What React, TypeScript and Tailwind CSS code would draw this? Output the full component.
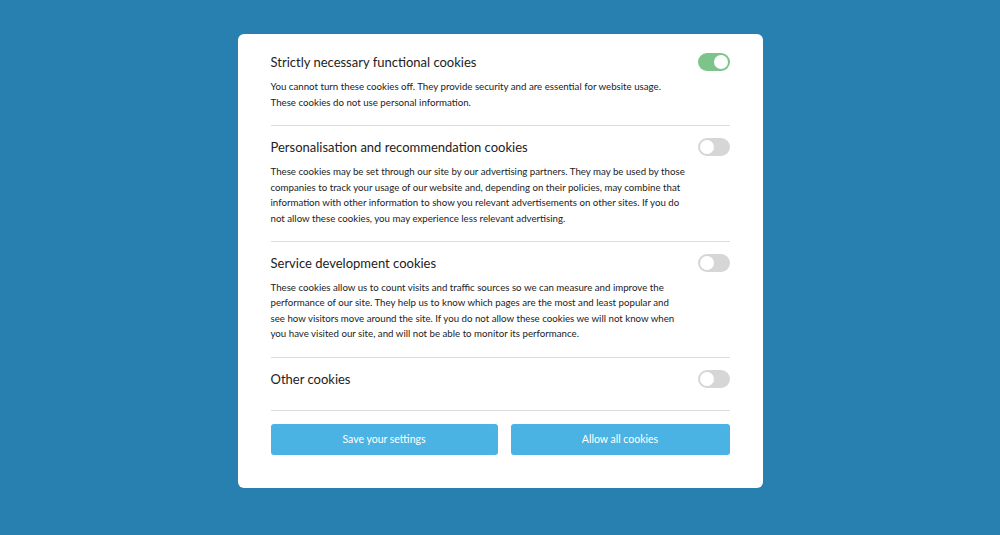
const sections = [
  {
    title: 'Strictly necessary functional cookies',
    on: true,
    body: [
      'You cannot turn these cookies off. They provide security and are essential for website usage.',
      'These cookies do not use personal information.',
    ],
  },
  {
    title: 'Personalisation and recommendation cookies',
    on: false,
    body: [
      'These cookies may be set through our site by our advertising partners. They may be used by those',
      'companies to track your usage of our website and, depending on their policies, may combine that',
      'information with other information to show you relevant advertisements on other sites. If you do',
      'not allow these cookies, you may experience less relevant advertising.',
    ],
  },
  {
    title: 'Service development cookies',
    on: false,
    body: [
      'These cookies allow us to count visits and traffic sources so we can measure and improve the',
      'performance of our site. They help us to know which pages are the most and least popular and',
      'see how visitors move around the site. If you do not allow these cookies we will not know when',
      'you have visited our site, and will not be able to monitor its performance.',
    ],
  },
  { title: 'Other cookies', on: false, body: [] as string[] },
]

function Toggle({ on }: { on: boolean }) {
  return (
    <div
      className={`flex h-[18px] w-[32px] shrink-0 items-center rounded-full px-[2px] ${
        on ? 'justify-end bg-[#7cc489]' : 'justify-start bg-[#d6d6d6]'
      }`}
    >
      <div className="h-[14px] w-[14px] rounded-full bg-white" />
    </div>
  )
}

export default function App() {
  return (
    <div
      className="flex h-[535px] w-full justify-center bg-[#2780b0] pt-[34px]"
      style={{ fontFamily: 'Lato, "Open Sans", sans-serif' }}
    >
      <div className="h-[454px] w-[525px] rounded-[6px] bg-white px-[33px] pt-[7px] text-[#222]">
        {sections.map((s, i) => (
          <div
            key={s.title}
            className={`border-b border-[#dcdcdc] pt-[12px] ${
              s.body.length === 0 ? 'pb-[22px]' : i === 1 ? 'pb-[14px]' : 'pb-[15px]'
            }`}
          >
            <div className="flex h-[18px] items-center justify-between">
              <h3 className="text-[13px] leading-[18px] font-normal">{s.title}</h3>
              <Toggle on={s.on} />
            </div>
            {s.body.length > 0 && (
              <p className="mt-[8px] text-[9.7px] leading-[15.6px]">
                {s.body.map((line) => (
                  <span key={line} className="block whitespace-nowrap">
                    {line}
                  </span>
                ))}
              </p>
            )}
          </div>
        ))}
        <div className="mt-[13px] flex gap-[13px]">
          <button className="h-[31px] w-[227px] rounded-[3px] bg-[#4bb3e4] text-[10.5px] text-white">
            Save your settings
          </button>
          <button className="h-[31px] flex-1 rounded-[3px] bg-[#4bb3e4] text-[10.5px] text-white">
            Allow all cookies
          </button>
        </div>
      </div>
    </div>
  )
}
